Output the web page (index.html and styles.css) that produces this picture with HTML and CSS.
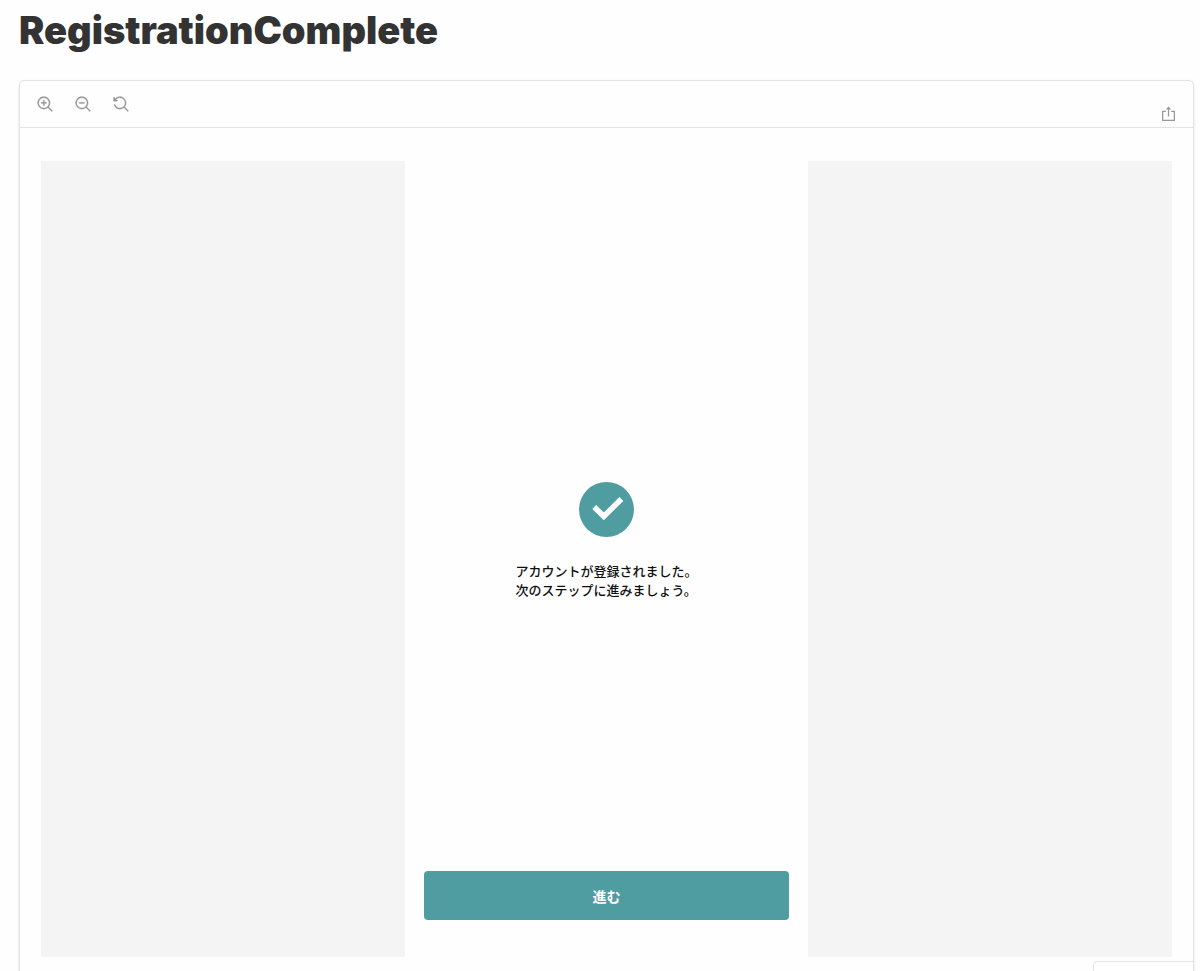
FILE: index.html
```html
<!DOCTYPE html>
<html lang="ja">
<head>
    <meta charset="UTF-8">
    <meta name="viewport" content="width=device-width, initial-scale=1.0">
    <title>RegistrationComplete</title>
    <link rel="stylesheet" href="styles.css">
</head>
<body>
    <main class="docs">
        <h1 class="title">RegistrationComplete</h1>

        <section class="preview">
            <div class="toolbar">
                <div class="zoom-tools">
                    <button class="icon-btn" type="button" aria-label="Zoom in">
                        <svg viewBox="0 0 14 14">
                            <path d="M6 3.5a.5.5 0 01.5.5v1.5H8a.5.5 0 010 1H6.5V8a.5.5 0 01-1 0V6.5H4a.5.5 0 010-1h1.5V4a.5.5 0 01.5-.5z"/>
                            <path fill-rule="evenodd" d="M9.544 10.206a5.5 5.5 0 11.662-.662.5.5 0 01.148.102l3 3a.5.5 0 01-.708.708l-3-3a.5.5 0 01-.102-.148zM10.5 6a4.5 4.5 0 11-9 0 4.5 4.5 0 019 0z"/>
                        </svg>
                    </button>
                    <button class="icon-btn" type="button" aria-label="Zoom out">
                        <svg viewBox="0 0 14 14">
                            <path d="M4 5.5a.5.5 0 000 1h4a.5.5 0 000-1H4z"/>
                            <path fill-rule="evenodd" d="M9.544 10.206a5.5 5.5 0 11.662-.662.5.5 0 01.148.102l3 3a.5.5 0 01-.708.708l-3-3a.5.5 0 01-.102-.148zM10.5 6a4.5 4.5 0 11-9 0 4.5 4.5 0 019 0z"/>
                        </svg>
                    </button>
                    <button class="icon-btn" type="button" aria-label="Reset zoom">
                        <svg viewBox="0 0 14 14">
                            <path d="M.8 1.400v2.800h2.800z"/>
                            <path d="M1.5 2.837V1.5a.5.5 0 00-1 0V4a.5.5 0 00.5.5h2.5a.5.5 0 000-1H2.258a4.5 4.5 0 11-.496 4.016.5.5 0 10-.942.337 5.502 5.502 0 008.724 2.353.5.5 0 00.102.148l3 3a.5.5 0 00.708-.708l-3-3a.5.5 0 00-.148-.102A5.5 5.5 0 101.5 2.837z"/>
                        </svg>
                    </button>
                </div>
                <a class="share" href="#" aria-label="Open canvas in new tab">
                    <svg viewBox="0 0 14 15">
                        <path d="M4.5 5H1.500v8.500h11V5H9.500M7 1.500V9.800" fill="none" stroke="currentColor" stroke-width="1.200"/>
                        <path d="M4.500 3.300L7 .5l2.500 2.800z"/>
                    </svg>
                </a>
            </div>

            <div class="story">
                <div class="side"></div>
                <div class="complete">
                    <div class="message">
                        <svg class="check" viewBox="0 0 55 55">
                            <circle cx="27.5" cy="27.5" r="27.5"/>
                            <path d="M15.2 25L24.800 34.300L42.400 17"/>
                        </svg>
                        <p>アカウントが登録されました。<br>次のステップに進みましょう。</p>
                    </div>
                    <button class="next" type="button">進む</button>
                </div>
                <div class="side"></div>
            </div>

            <button class="code-btn" type="button">Show code</button>
        </section>
    </main>
</body>
</html>
```

FILE: styles.css
```css
* {
    box-sizing: border-box;
}

body {
    margin: 0;
    background: #fefefe;
    color: #333;
    font-family: Inter, "Noto Sans CJK JP", sans-serif;
}

.docs {
    height: 100vh;
    padding: 8px 6px 0 19px;
    overflow: hidden;
}

.title {
    margin: 0 0 28px;
    font-size: 38px;
    line-height: 44px;
    font-weight: 900;
}

.preview {
    display: flex;
    flex-direction: column;
    border: 1px solid #e3e3e3;
    border-radius: 5px;
    box-shadow: 0 1px 3px rgba(0, 0, 0, 0.1);
    overflow: hidden;
}

/* toolbar */
.toolbar {
    display: flex;
    justify-content: space-between;
    height: 47px;
    padding: 0 17px;
    border-bottom: 1px solid #e3e3e3;
    color: #999;
}

.zoom-tools {
    display: flex;
    align-items: center;
    gap: 22px;
}

.icon-btn {
    display: flex;
    padding: 0;
    border: none;
    background: none;
    color: inherit;
    cursor: pointer;
}

.icon-btn svg {
    width: 16px;
    height: 16px;
    fill: currentColor;
    stroke: currentColor;
    stroke-width: 0.3;
}

.share {
    align-self: flex-end;
    color: inherit;
    margin-bottom: 5px;
}

.share svg {
    display: block;
    width: 15px;
    height: 16px;
    fill: currentColor;
}

/* story */
.story {
    display: grid;
    grid-template-columns: repeat(3, 1fr);
    gap: 19px;
    min-height: 82vh;
    margin: 33px 21px 4px;
}

.side {
    background: #f4f4f4;
}

.complete {
    display: flex;
    flex-direction: column;
    padding-bottom: 37px;
}

.message {
    flex: 1;
    display: flex;
    flex-direction: column;
    align-items: center;
    justify-content: center;
    padding-top: 48px;
    color: #111;
    font-family: "Noto Sans CJK JP", sans-serif;
    font-size: 13px;
    line-height: 19px;
    font-weight: 500;
}

.message p {
    margin: 24px 0 0;
}

.check {
    width: 55px;
    height: 55px;
    fill: #509da1;
}

.check path {
    fill: none;
    stroke: #fff;
    stroke-width: 5.5;
}

.next {
    height: 49px;
    border: none;
    border-radius: 4px;
    background: #509da1;
    color: #fff;
    font-family: "Noto Sans CJK JP", sans-serif;
    font-size: 14px;
    font-weight: 700;
    cursor: pointer;
}

.code-btn {
    align-self: flex-end;
    padding: 8px 17px;
    border: 1px solid #e3e3e3;
    border-width: 1px 0 0 1px;
    border-radius: 5px 0 0 0;
    background: #fff;
    color: #333;
    font-family: inherit;
    font-size: 12px;
    line-height: 16px;
    font-weight: 700;
    cursor: pointer;
}
```
